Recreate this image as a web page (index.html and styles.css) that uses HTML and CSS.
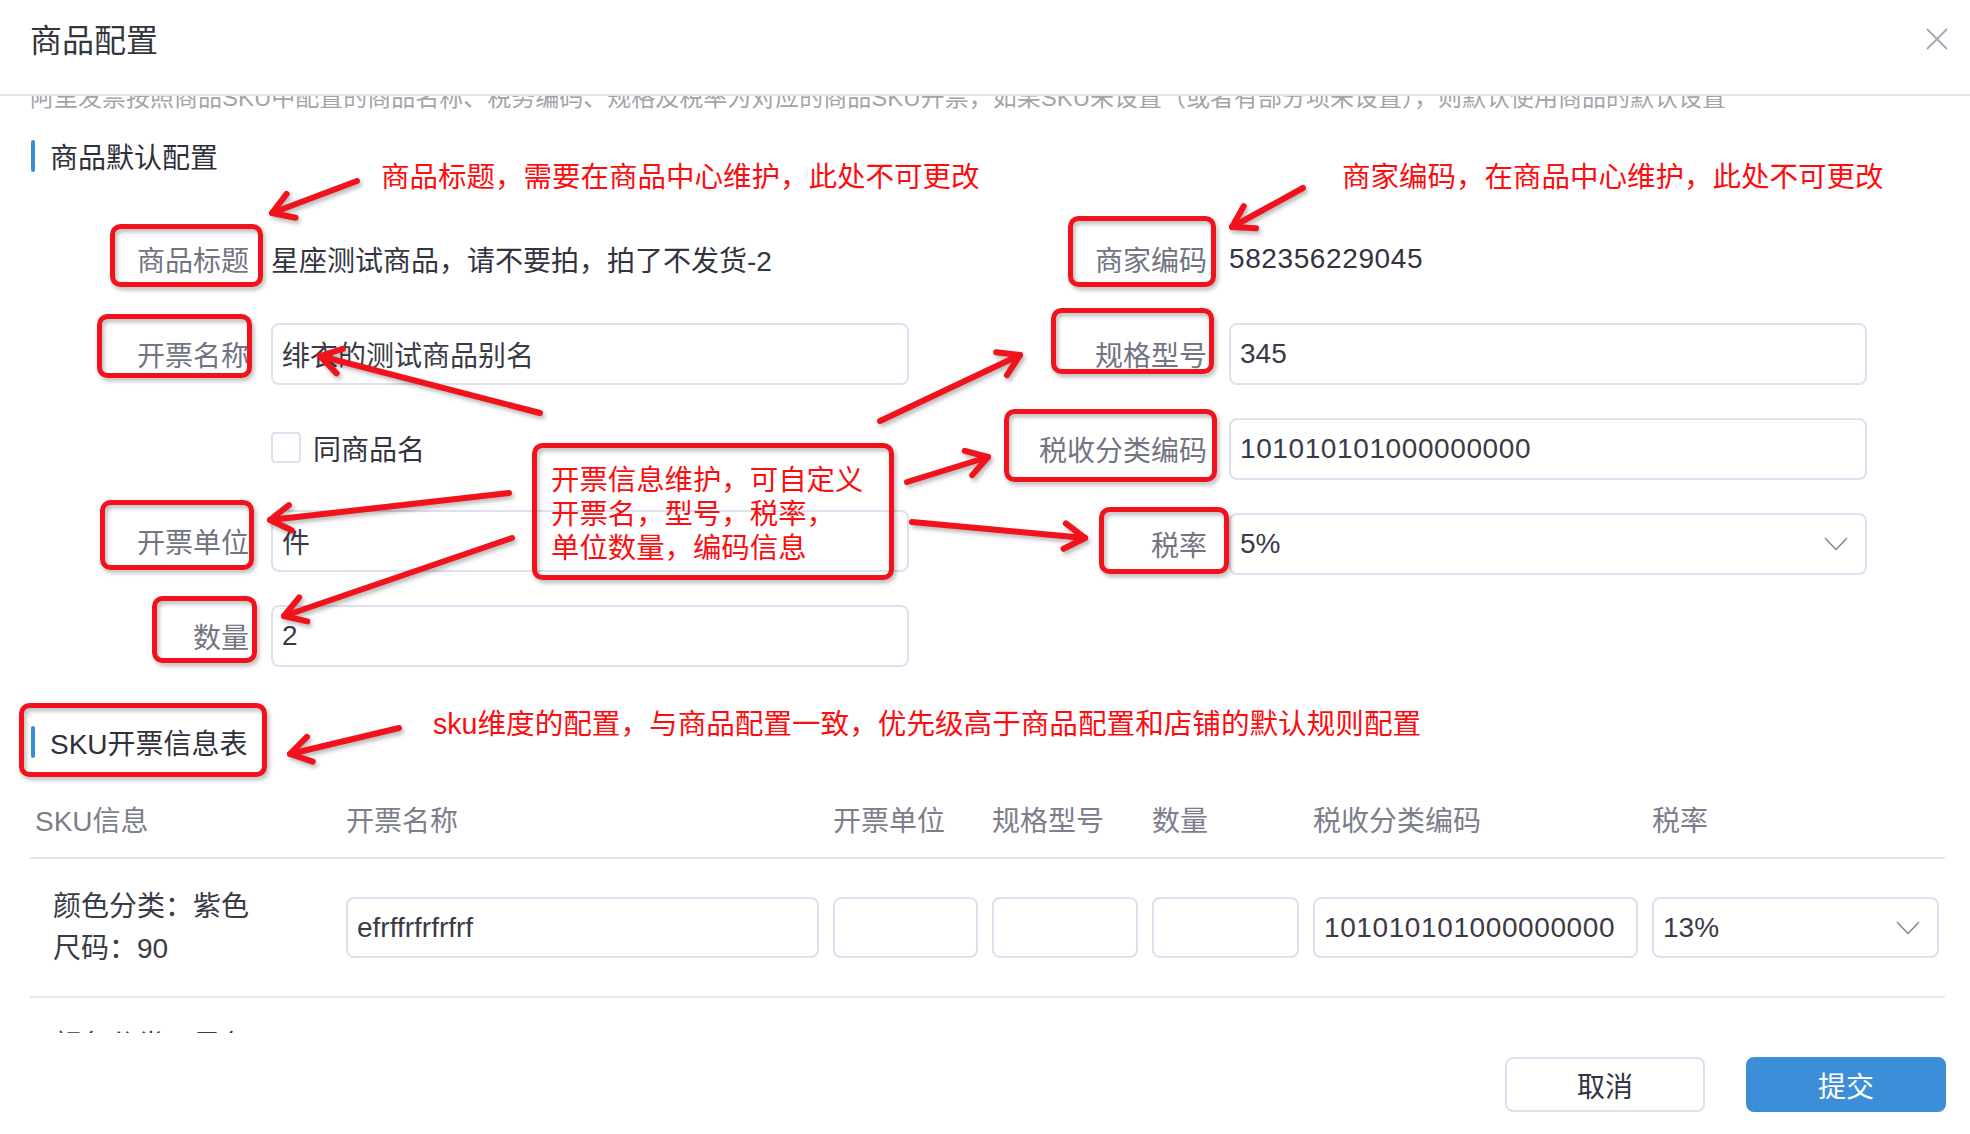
FILE: index.html
```html
<!DOCTYPE html>
<html lang="zh-CN">
  <head>
    <meta charset="UTF-8" />
    <meta name="viewport" content="width=device-width, initial-scale=1.0" />
    <title>商品配置</title>
    <link rel="stylesheet" href="styles.css">
  </head>
  <body>
    <div class="modal">
      <!-- 1. 头部 -->
      <div class="modal-header">
        <h3 class="modal-title">商品配置</h3>
        <span class="modal-close">
          <svg width="22" height="22" viewBox="0 0 22 22">
            <path d="M1 1 L21 21 M21 1 L1 21" stroke="#a5a8b4" stroke-width="1.8" fill="none" />
          </svg>
        </span>
      </div>

      <!-- 2. 内容区 (已滚动) -->
      <div class="modal-body">
        <div class="body-inner">
          <p class="notice">阿里发票按照商品SKU中配置的商品名称、税务编码、规格及税率为对应的商品SKU开票，如果SKU未设置（或者有部分项未设置），则默认使用商品的默认设置</p>

          <h4 class="sec-title">商品默认配置</h4>
          <div class="form-cols">
            <div class="form-col form-col-left">
              <div class="form-item">
                <label class="form-label">商品标题</label>
                <span class="form-text">星座测试商品，请不要拍，拍了不发货-2</span>
              </div>
              <div class="form-item">
                <label class="form-label">开票名称</label>
                <input class="form-input" value="绯衣的测试商品别名" />
              </div>
              <div class="form-item form-item-check">
                <label class="form-label"></label>
                <span class="check-box"></span>
                <span class="check-text">同商品名</span>
              </div>
              <div class="form-item">
                <label class="form-label">开票单位</label>
                <input class="form-input" value="件" />
              </div>
              <div class="form-item">
                <label class="form-label">数量</label>
                <input class="form-input" value="2" />
              </div>
            </div>
            <div class="form-col">
              <div class="form-item">
                <label class="form-label">商家编码</label>
                <span class="form-text num">582356229045</span>
              </div>
              <div class="form-item">
                <label class="form-label">规格型号</label>
                <input class="form-input" value="345" />
              </div>
              <div class="form-item">
                <label class="form-label">税收分类编码</label>
                <input class="form-input num" value="101010101000000000" />
              </div>
              <div class="form-item">
                <label class="form-label">税率</label>
                <div class="form-input form-select">
                  <span>5%</span>
                  <svg width="24" height="14" viewBox="0 0 24 14">
                    <polyline points="1,1 12,12.5 23,1" fill="none" stroke="#8b8d98" stroke-width="1.6" />
                  </svg>
                </div>
              </div>
            </div>
          </div>

          <h4 class="sec-title sec-title-sku">SKU开票信息表</h4>
          <div class="sku-table">
            <div class="sku-row sku-head">
              <div class="sku-cell">SKU信息</div>
              <div class="sku-cell">开票名称</div>
              <div class="sku-cell">开票单位</div>
              <div class="sku-cell">规格型号</div>
              <div class="sku-cell">数量</div>
              <div class="sku-cell">税收分类编码</div>
              <div class="sku-cell">税率</div>
            </div>
            <div class="sku-row sku-body">
              <div class="sku-cell sku-info">颜色分类：紫色<br />尺码：90</div>
              <div class="sku-cell"><input class="form-input cell-input" value="efrffrfrfrfrf" /></div>
              <div class="sku-cell"><input class="form-input cell-input" value="" /></div>
              <div class="sku-cell"><input class="form-input cell-input" value="" /></div>
              <div class="sku-cell"><input class="form-input cell-input" value="" /></div>
              <div class="sku-cell"><input class="form-input cell-input num" value="101010101000000000" /></div>
              <div class="sku-cell">
                <div class="form-input cell-input form-select">
                  <span>13%</span>
                  <svg width="24" height="14" viewBox="0 0 24 14">
                    <polyline points="1,1 12,12.5 23,1" fill="none" stroke="#8b8d98" stroke-width="1.6" />
                  </svg>
                </div>
              </div>
            </div>
            <div class="sku-row sku-body">
              <div class="sku-cell sku-info">颜色分类：黑色<br />尺码：95</div>
              <div class="sku-cell"><input class="form-input cell-input" value="efrffrfrfrfrf" /></div>
              <div class="sku-cell"><input class="form-input cell-input" value="" /></div>
              <div class="sku-cell"><input class="form-input cell-input" value="" /></div>
              <div class="sku-cell"><input class="form-input cell-input" value="" /></div>
              <div class="sku-cell"><input class="form-input cell-input" value="" /></div>
              <div class="sku-cell"><input class="form-input cell-input" value="" /></div>
            </div>
          </div>
        </div>
      </div>

      <!-- 3. 底部按钮 -->
      <div class="modal-footer">
        <button class="btn">取消</button>
        <button class="btn btn-primary">提交</button>
      </div>

      <!-- 4. 标注层 (红框/箭头/说明文字) -->
      <svg class="marks" width="1970" height="1134" viewBox="0 0 1970 1134">
        <defs>
          <marker id="head" viewBox="0 0 36 36" refX="31" refY="18" markerWidth="36" markerHeight="36" markerUnits="userSpaceOnUse" orient="auto">
            <path d="M10.6 5.3 L31 18 L10.6 30.7" fill="none" stroke="#f2121c" stroke-width="6" stroke-linecap="round" stroke-linejoin="round" />
          </marker>
        </defs>
        <g fill="none" stroke="#f2121c" stroke-width="5">
          <rect x="112.5" y="226.5" width="148" height="58" rx="8" />
          <rect x="99.5" y="316.5" width="150" height="59" rx="8" />
          <rect x="1070.5" y="218.5" width="143" height="66" rx="8" />
          <rect x="1053.5" y="310.5" width="158" height="61" rx="8" />
          <rect x="1006.5" y="411.5" width="208" height="68" rx="8" />
          <rect x="1101.5" y="509.5" width="125" height="62" rx="8" />
          <rect x="102.5" y="502.5" width="149" height="65" rx="8" />
          <rect x="154.5" y="598.5" width="100" height="62" rx="8" />
          <rect x="21.5" y="705.5" width="243" height="69" rx="8" />
          <rect x="534.5" y="445.5" width="357" height="132" rx="8" />
        </g>
        <g stroke="#f2121c" stroke-width="6" stroke-linecap="round">
          <line x1="357" y1="181" x2="272" y2="213" marker-end="url(#head)" />
          <line x1="1303" y1="188" x2="1232" y2="227" marker-end="url(#head)" />
          <line x1="540" y1="413" x2="320" y2="356" marker-end="url(#head)" />
          <line x1="880" y1="421" x2="1020" y2="355" marker-end="url(#head)" />
          <line x1="907" y1="482" x2="988" y2="457" marker-end="url(#head)" />
          <line x1="912" y1="522" x2="1085" y2="538" marker-end="url(#head)" />
          <line x1="509" y1="493" x2="270" y2="520" marker-end="url(#head)" />
          <line x1="512" y1="538" x2="284" y2="616" marker-end="url(#head)" />
          <line x1="399" y1="728" x2="290" y2="754" marker-end="url(#head)" />
        </g>
      </svg>
      <div class="mark-text mark-title">商品标题，需要在商品中心维护，此处不可更改</div>
      <div class="mark-text mark-code">商家编码，在商品中心维护，此处不可更改</div>
      <div class="mark-text mark-sku">sku维度的配置，与商品配置一致，优先级高于商品配置和店铺的默认规则配置</div>
      <div class="mark-text mark-invoice">开票信息维护，可自定义<br />开票名，型号，税率，<br />单位数量，编码信息</div>
    </div>
  </body>
</html>
```

FILE: styles.css
```css
/* 基本初始化 */
html,
body,
h3,
h4,
p {
  margin: 0;
  padding: 0;
}
body {
  background: #fff;
  font-family: "Liberation Sans", "Noto Sans CJK SC", sans-serif;
  font-size: 28px;
  color: #33343f;
}

/* 弹窗外框 */
.modal {
  position: relative;
  width: 1970px;
  height: 1134px;
  overflow: hidden;
}

/************* 1. 头部 *************/
.modal-header {
  display: flex;
  justify-content: space-between;
  align-items: flex-start;
  box-sizing: border-box;
  height: 96px;
  padding: 19px 22px 0 30px;
  border-bottom: 2px solid #e4e4e6;
}
.modal-title {
  font-size: 32px;
  font-weight: normal;
  line-height: 44px;
  color: #34353d;
}
.modal-close {
  margin-top: 9px;
  line-height: 0;
}

/************* 2. 内容区 *************/
.modal-body {
  height: 937px;
  overflow: hidden;
  padding: 0 25px 0 30px;
}
/* 内容已向下滚动一点, 提示文字被头部盖住一半 */
.body-inner {
  margin-top: -15px;
}
.notice {
  font-size: 24px;
  line-height: 34px;
  color: #a4a4a8;
  white-space: nowrap;
}

/* 区块标题 */
.sec-title {
  display: flex;
  align-items: center;
  height: 40px;
  margin-top: 21px;
  font-size: 28px;
  font-weight: normal;
  color: #2f3039;
}
.sec-title::before {
  content: "";
  width: 4px;
  height: 32px;
  margin: 0 15px 0 1px;
  border-radius: 2px;
  background: #3b8ad9;
}
.sec-title-sku {
  margin-top: 55px;
}

/* 两列表单 */
.form-cols {
  display: flex;
  margin-top: 52px;
}
.form-col {
  display: flex;
  flex-direction: column;
}
.form-col-left {
  width: 958px;
}
.form-item {
  display: flex;
  align-items: center;
  height: 62px;
  margin-bottom: 33px;
}
.form-item:last-child {
  margin-bottom: 0;
}
.form-item-check {
  height: 59px;
}
.form-label {
  flex: none;
  box-sizing: border-box;
  width: 241px;
  padding-right: 22px;
  text-align: right;
  color: #727482;
}
.form-text {
  color: #33343f;
}
/* 数字串稍宽一点 */
.num {
  letter-spacing: 0.6px;
}

/* 输入框 */
.form-input {
  box-sizing: border-box;
  width: 638px;
  height: 62px;
  padding: 0 9px;
  border: 2px solid #dde0ee;
  border-radius: 8px;
  background: #fff;
  font: inherit;
  color: #3a3b46;
  outline: none;
}
.form-input.num {
  letter-spacing: 0.6px;
}
.form-select {
  display: flex;
  justify-content: space-between;
  align-items: center;
  padding-right: 17px;
}

/* 复选框 */
.check-box {
  box-sizing: border-box;
  width: 30px;
  height: 31px;
  border: 2px solid #dde0ee;
  border-radius: 4px;
}
.check-text {
  margin-left: 12px;
}

/* SKU表格 */
.sku-table {
  margin-top: 19px;
  width: 1915px;
}
.sku-row {
  display: grid;
  grid-template-columns: 315px 487px 159px 160px 161px 339px 294px;
  align-items: center;
  box-sizing: border-box;
  border-bottom: 2px solid #e3e6f1;
}
.sku-head {
  height: 78px;
  color: #7c7e8b;
}
.sku-head .sku-cell:first-child {
  padding-left: 5px;
}
.sku-body {
  height: 139px;
}
.sku-cell {
  padding: 0 13px 0 1px;
}
.sku-cell:last-child {
  padding-right: 6px;
}
.sku-info {
  padding-left: 23px;
  line-height: 42px;
  color: #3a3b46;
}
.cell-input {
  width: 100%;
  height: 61px;
}

/************* 3. 底部按钮 *************/
.modal-footer {
  display: flex;
  justify-content: flex-end;
  gap: 41px;
  padding: 24px 24px 0 0;
}
.btn {
  width: 200px;
  height: 55px;
  border: 2px solid #dde0ee;
  border-radius: 8px;
  background: #fff;
  font: inherit;
  color: #33343f;
}
.btn-primary {
  border-color: #3d8ed8;
  background: #3d8ed8;
  color: #fff;
}

/************* 4. 标注层 *************/
.marks {
  position: absolute;
  top: 0;
  left: 0;
  pointer-events: none;
  filter: drop-shadow(2px 3px 2px rgba(0, 0, 0, 0.28));
}
.mark-text {
  position: absolute;
  font-size: 28.5px;
  line-height: 40px;
  color: #fb0d10;
  white-space: nowrap;
}
.mark-title {
  left: 381px;
  top: 157px;
}
.mark-code {
  left: 1342px;
  top: 157px;
}
.mark-sku {
  left: 433px;
  top: 704px;
  font-size: 28.6px;
}
.mark-invoice {
  left: 551px;
  top: 463px;
  font-size: 28.4px;
  line-height: 34px;
}
```
